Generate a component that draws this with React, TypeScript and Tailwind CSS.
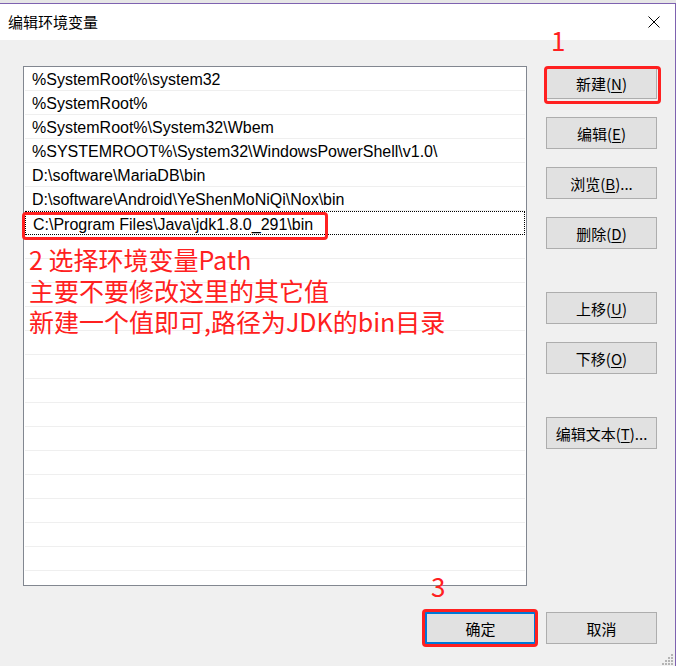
import React from "react";

const rows = [
  "%SystemRoot%\\system32",
  "%SystemRoot%",
  "%SystemRoot%\\System32\\Wbem",
  "%SYSTEMROOT%\\System32\\WindowsPowerShell\\v1.0\\",
  "D:\\software\\MariaDB\\bin",
  "D:\\software\\Android\\YeShenMoNiQi\\Nox\\bin",
  "C:\\Program Files\\Java\\jdk1.8.0_291\\bin",
];

const cjk = { fontFamily: '"Noto Sans CJK SC", "Liberation Sans", sans-serif' };

function Btn({
  label,
  mn,
  tail = "",
  primary = false,
}: {
  label: string;
  mn?: string;
  tail?: string;
  primary?: boolean;
}) {
  return (
    <div
      className={
        "w-[111px] h-[32px] flex items-center justify-center bg-[#e1e1e1] text-[15px] text-black leading-none " +
        (primary ? "border-2 border-[#0078d7]" : "border border-[#adadad]")
      }
      style={cjk}
    >
      <span>
        {label}
        {mn && (
          <>
            (<span className="underline underline-offset-2">{mn}</span>)
          </>
        )}
        {tail}
      </span>
    </div>
  );
}

function Grip() {
  const dots = [
    [9, 0],
    [6, 3],
    [9, 3],
    [3, 6],
    [6, 6],
    [9, 6],
    [0, 9],
    [3, 9],
    [6, 9],
    [9, 9],
  ];
  return (
    <svg width="11" height="11" viewBox="0 0 11 11">
      {dots.map(([x, y], i) => (
        <rect key={i} x={x} y={y} width="2" height="2" fill="#b4b4b4" />
      ))}
    </svg>
  );
}

export default function App() {
  const total = 22;
  return (
    <div className="w-[676px] h-[666px] bg-[#e6e6e6] pt-[3px] overflow-hidden">
      <div className="relative h-[663px] border-t border-r border-[#7e62b0] bg-[#f0f0f0] flex flex-col">
        {/* 标题栏 */}
        <div className="h-[36px] bg-white flex items-center justify-between pl-[8px] pr-[15px]">
          <span className="text-[15px] text-black" style={cjk}>
            编辑环境变量
          </span>
          <svg width="12" height="12" viewBox="0 0 12 12">
            <path d="M0.5 0.5 L11.5 11.5 M11.5 0.5 L0.5 11.5" stroke="#000" strokeWidth="1" />
          </svg>
        </div>

        {/* 主体 */}
        <div className="flex pl-[23px] pr-[18px] pt-[26px]">
          <div
            className="w-[504px] h-[520px] border border-[#828790] bg-white overflow-hidden"
            style={{ fontFamily: '"Liberation Sans", Arial, sans-serif' }}
          >
            {Array.from({ length: total }).map((_, i) => (
              <div
                key={i}
                className={
                  "h-[24px] mx-[1px] pl-[7px] pt-[3px] flex items-center text-[16px] text-black whitespace-nowrap " +
                  (i === 6
                    ? "border border-dotted border-black pl-[6px]"
                    : "border-b border-[#efefef]")
                }
              >
                {rows[i] ?? ""}
              </div>
            ))}
          </div>

          <div className="ml-[19px] mt-[1px] flex flex-col">
            <Btn label="新建" mn="N" />
            <div className="h-[18px]" />
            <Btn label="编辑" mn="E" />
            <div className="h-[18px]" />
            <Btn label="浏览" mn="B" tail="..." />
            <div className="h-[18px]" />
            <Btn label="删除" mn="D" />
            <div className="h-[43px]" />
            <Btn label="上移" mn="U" />
            <div className="h-[18px]" />
            <Btn label="下移" mn="O" />
            <div className="h-[43px]" />
            <Btn label="编辑文本" mn="T" tail="..." />
          </div>
        </div>

        {/* 底部按钮 */}
        <div className="flex justify-end gap-[10px] pr-[18px] mt-[26px]">
          <Btn label="确定" primary />
          <Btn label="取消" />
        </div>

        <div className="absolute right-[2px] bottom-[1px]">
          <Grip />
        </div>

        {/* 标注 */}
        <div className="absolute left-[544px] top-[62px] w-[117px] h-[38px] border-[3px] border-[#ff2020] rounded-[4px]" />
        <div className="absolute left-[22px] top-[208px] w-[306px] h-[28px] border-[3px] border-[#ff2020] rounded-[4px]" />
        <div className="absolute left-[422px] top-[605px] w-[116px] h-[38px] border-[3px] border-[#ff2020] rounded-[4px]" />

        <span
          className="absolute left-[551px] top-[21px] text-[26px] leading-[30px] text-[#ff2020]"
          style={cjk}
        >
          1
        </span>
        <span
          className="absolute left-[431px] top-[567px] text-[26px] leading-[30px] text-[#ff2020]"
          style={cjk}
        >
          3
        </span>

        <div
          className="absolute left-[29px] top-[240px] text-[25px] leading-[31px] text-[#ff2020] whitespace-nowrap"
          style={cjk}
        >
          <div>2 选择环境变量Path</div>
          <div>主要不要修改这里的其它值</div>
          <div>新建一个值即可,路径为JDK的bin目录</div>
        </div>
      </div>
    </div>
  );
}
